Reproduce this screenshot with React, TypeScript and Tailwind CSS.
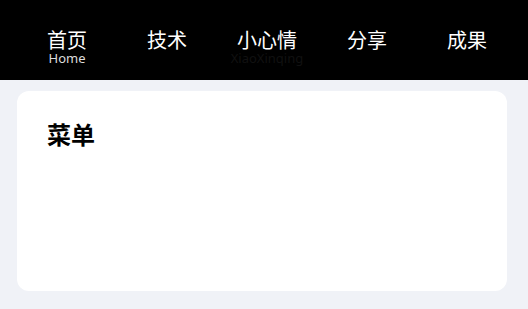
import React from "react";

const items: { t: string; s?: string; sc?: string }[] = [
  { t: "首页", s: "Home", sc: "text-[#dcdcdc]" },
  { t: "技术" },
  { t: "小心情", s: "XiaoXinqing", sc: "text-[#111111]" },
  { t: "分享" },
  { t: "成果" },
];

export default function App() {
  return (
    <div
      className="w-[528px] h-[309px] bg-[#f0f2f7] overflow-hidden"
      style={{ fontFamily: '"Noto Sans", "Noto Sans CJK SC", sans-serif' }}
    >
      <div className="h-[80px] bg-black flex pl-[17px]">
        {items.map((it) => (
          <div key={it.t} className="w-[100px] shrink-0 flex flex-col items-center pt-[30px]">
            <div className="text-[20px] leading-[22px] text-white">{it.t}</div>
            {it.s && (
              <div className={`text-[13px] leading-[12px] ${it.sc}`}>{it.s}</div>
            )}
          </div>
        ))}
      </div>
      <div className="pl-[17px] pr-[21px] pt-[11px]">
        <div className="h-[200px] bg-white rounded-[12px] px-[30px] pt-[28px]">
          <div className="text-[24px] leading-[32px] font-bold text-black">菜单</div>
        </div>
      </div>
    </div>
  );
}
